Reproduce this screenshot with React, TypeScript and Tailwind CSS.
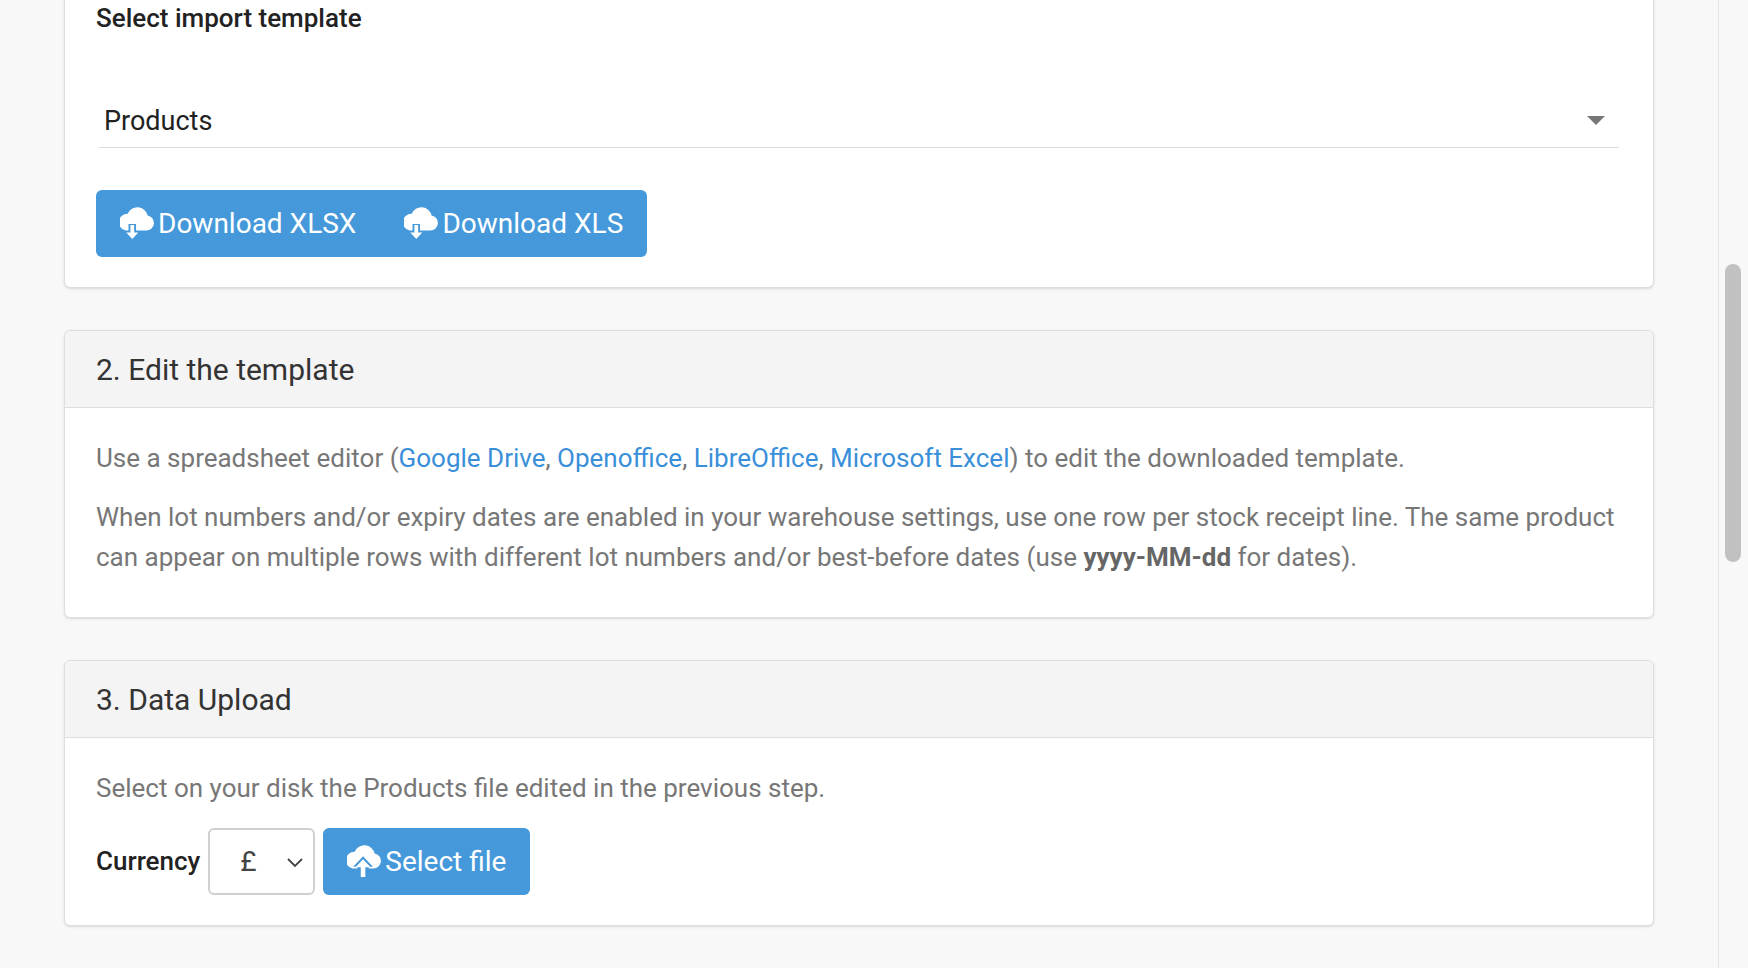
import React from 'react';

function CloudDown() {
  return (
    <svg width="34" height="34" viewBox="4 5 17 18" fill="currentColor">
      <path d="M6.5 17.5H8v-3.5h4v3.5h1.5H17.5a4 4 0 0 0 .6-7.95A5.5 5.5 0 0 0 7.6 8.6 4.5 4.5 0 0 0 6.5 17.5z" />
      <path d="M9 14.5h2v4h2.2L10 22l-3.2-3.5H9z" />
    </svg>
  );
}

function CloudUp() {
  return (
    <svg width="34" height="34" viewBox="4 5 17 18" fill="currentColor">
      <path d="M6.5 17.5H9v-1H6.8l5.2-5.5 5.2 5.5H15v1h2.5a4 4 0 0 0 .6-7.95A5.5 5.5 0 0 0 7.6 8.6 4.5 4.5 0 0 0 6.5 17.5z" />
      <path d="M12 12.5l-4 4.3h2.8V22h2.4v-5.2H16z" />
    </svg>
  );
}

const link = 'text-[#3a8fd9]';

export default function App() {
  return (
    <div className="relative h-[968px] w-[1748px] overflow-hidden bg-[#f8f8f8] font-[Roboto]">
      <div className="absolute right-0 top-0 h-full w-[30px] border-l border-[#e6e6e6] bg-[#f8f8f8]">
        <div className="ml-[6px] mt-[264px] h-[298px] w-[16px] rounded-full bg-[#c1c1c1]" />
      </div>
      <div className="ml-[64px] flex w-[1590px] flex-col gap-[42px]">
        <div className="-mt-[6px] rounded-b-md border border-t-0 border-[#dedede] bg-white px-[31px] pb-[30px] shadow-sm">
          <div className="pt-[6px] text-[26px] font-medium leading-[36px] text-[#222]">Select import template</div>
          <div className="mx-[3px] mt-[68px] flex h-[44px] items-start justify-between border-b border-[#dcdcdc] pl-[5px] pr-[14px]">
            <span className="text-[27px] leading-[34px] text-[#222]">Products</span>
            <span className="mt-[12px] h-0 w-0 border-x-[9px] border-t-[9px] border-x-transparent border-t-[#777]" />
          </div>
          <div className="mt-[42px] inline-flex h-[67px] items-center gap-[48px] rounded-md bg-[#4599da] px-[24px] text-[28px] text-white">
            <span className="flex items-center gap-[4px]"><CloudDown />Download XLSX</span>
            <span className="flex items-center gap-[4px]"><CloudDown />Download XLS</span>
          </div>
        </div>

        <div className="rounded-md border border-[#dedede] bg-white shadow-sm">
          <div className="flex h-[77px] items-center rounded-t-md border-b border-[#dedede] bg-[#f4f4f4] px-[31px] text-[30px] text-[#333]">2. Edit the template</div>
          <div className="px-[31px] pb-[40px] pt-[30px] text-[26px] leading-[40px] text-[#777]">
            <p>
              Use a spreadsheet editor (<span className={link}>Google Drive</span>, <span className={link}>Openoffice</span>, <span className={link}>LibreOffice</span>, <span className={link}>Microsoft Excel</span>) to edit the downloaded template.
            </p>
            <p className="mt-[19px]">
              When lot numbers and/or expiry dates are enabled in your warehouse settings, use one row per stock receipt line. The same product can appear on multiple rows with different lot numbers and/or best-before dates (use <b className="font-bold text-[#666]">yyyy-MM-dd</b> for dates).
            </p>
          </div>
        </div>

        <div className="rounded-md border border-[#dedede] bg-white shadow-sm">
          <div className="flex h-[77px] items-center rounded-t-md border-b border-[#dedede] bg-[#f4f4f4] px-[31px] text-[30px] text-[#333]">3. Data Upload</div>
          <div className="px-[31px] pb-[30px] pt-[30px]">
            <p className="text-[26px] leading-[40px] text-[#777]">Select on your disk the Products file edited in the previous step.</p>
            <div className="mt-[20px] flex items-center gap-[8px]">
              <span className="text-[26px] font-medium text-[#222]">Currency</span>
              <div className="flex h-[67px] w-[107px] items-center justify-between rounded-md border-2 border-[#d0d0d0] pl-[30px] pr-[8px] text-[28px] text-[#444]">
                <span>£</span>
                <svg width="20" height="20" viewBox="0 0 20 20" fill="none" stroke="#444" strokeWidth="1.8"><path d="M3 7l7 7 7-7" /></svg>
              </div>
              <div className="flex h-[67px] items-center gap-[4px] rounded-md bg-[#4599da] px-[24px] text-[28px] text-white">
                <CloudUp />Select file
              </div>
            </div>
          </div>
        </div>
      </div>
    </div>
  );
}
